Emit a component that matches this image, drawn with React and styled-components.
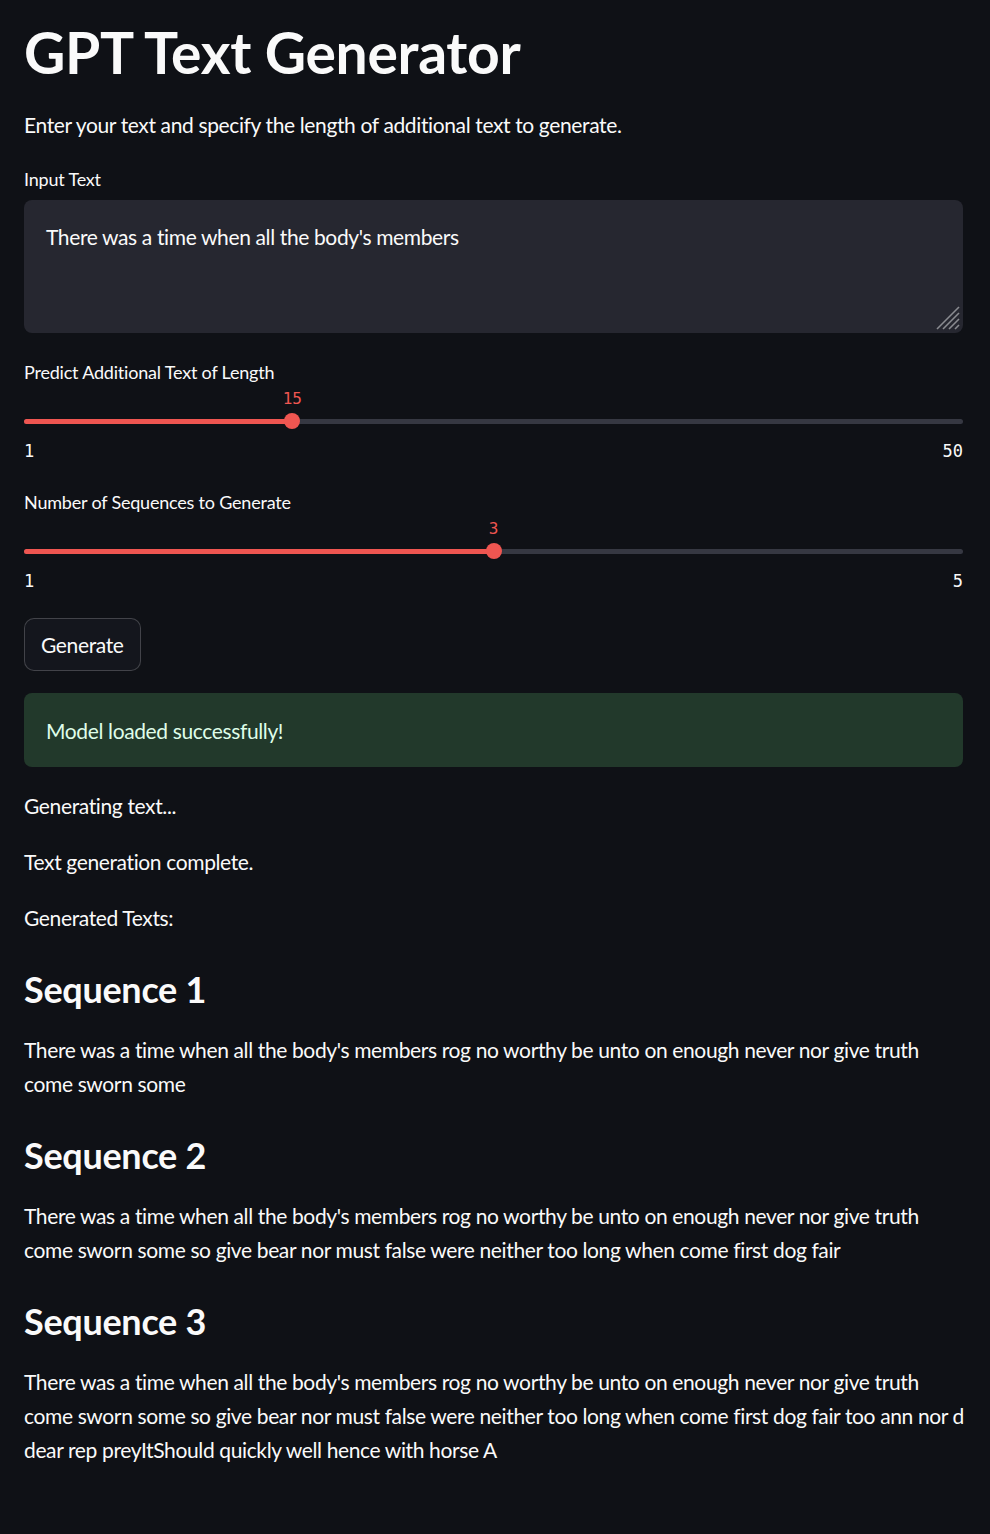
import React from "react";
import styled, { createGlobalStyle } from "styled-components";

const GlobalStyle = createGlobalStyle`
  body {
    margin: 0;
    background: #0f1116;
    color: #fafafa;
    font-family: Lato, "Open Sans", sans-serif;
  }
`;

const Main = styled.main`
  display: flex;
  flex-direction: column;
  gap: 22px;
  padding: 18px 27px 60px 24px;
  min-height: 1534px;
  box-sizing: border-box;
`;

const Title = styled.h1`
  margin: 0;
  font-size: 57px;
  line-height: 68px;
  font-weight: 700;
  letter-spacing: -0.3px;
`;

const Text = styled.p`
  margin: 0;
  font-size: 21px;
  line-height: 34px;
  letter-spacing: -0.37px;
  white-space: ${(p) => (p.$lines ? "nowrap" : "normal")};
`;

const Heading = styled.h3`
  margin: 0;
  padding-top: 11px;
  font-size: 36px;
  line-height: 43px;
  font-weight: 700;
  letter-spacing: -0.3px;
`;

const Field = styled.div`
  display: flex;
  flex-direction: column;
  margin-top: ${(p) => p.$offset || 0}px;
`;

const Label = styled.label`
  font-size: 18px;
  line-height: 30px;
  letter-spacing: -0.2px;
  margin-bottom: ${(p) => p.$gap || 0}px;
`;

const AreaWrap = styled.div`
  position: relative;
  height: 133px;
`;

const Area = styled.textarea`
  display: block;
  width: 100%;
  height: 100%;
  box-sizing: border-box;
  border: none;
  outline: none;
  resize: none;
  border-radius: 8px;
  background: #262730;
  color: #fafafa;
  font-family: inherit;
  font-size: 21px;
  line-height: 34px;
  letter-spacing: -0.37px;
  padding: 20px 22px;
`;

const Grip = styled.svg`
  position: absolute;
  right: 2px;
  bottom: 2px;
`;

const SliderBox = styled.div`
  display: flex;
  flex-direction: column;
`;

const ValueRow = styled.div`
  position: relative;
  height: 24px;
`;

const Value = styled.span`
  position: absolute;
  top: 0;
  transform: translateX(-50%);
  font-family: "DejaVu Sans Mono", "Liberation Mono", monospace;
  font-size: 16px;
  line-height: 24px;
  color: #ef5651;
`;

const Track = styled.div`
  position: relative;
  height: 20px;
  display: flex;
  align-items: center;
`;

const Rail = styled.div`
  width: 100%;
  height: 5px;
  border-radius: 3px;
  background: #363842;
  overflow: hidden;
`;

const Fill = styled.div`
  height: 100%;
  background: #ef5651;
`;

const Thumb = styled.div`
  position: absolute;
  top: 2px;
  width: 16px;
  height: 16px;
  border-radius: 50%;
  background: #ef5651;
  transform: translateX(-50%);
`;

const Ticks = styled.div`
  display: flex;
  justify-content: space-between;
  margin-top: 8px;
  font-family: "DejaVu Sans Mono", "Liberation Mono", monospace;
  font-size: 17px;
  line-height: 24px;
  color: #fafafa;
`;

const Button = styled.button`
  align-self: flex-start;
  margin-top: 3px;
  height: 53px;
  padding: 0 16px;
  border: 1px solid rgba(250, 250, 250, 0.2);
  border-radius: 10px;
  background: #14161d;
  color: #fafafa;
  font-family: inherit;
  font-size: 21px;
  letter-spacing: -0.37px;
`;

const Success = styled.div`
  height: 74px;
  box-sizing: border-box;
  padding: 0 22px;
  display: flex;
  align-items: center;
  border-radius: 8px;
  background: #22392b;
  color: #dffde9;
  font-size: 21px;
  letter-spacing: -0.37px;
`;

const Slider = ({ value, min, max }) => {
  const pct = ((value - min) / (max - min)) * 100;
  return (
    <SliderBox>
      <ValueRow>
        <Value style={{ left: `${pct}%` }}>{value}</Value>
      </ValueRow>
      <Track>
        <Rail>
          <Fill style={{ width: `${pct}%` }} />
        </Rail>
        <Thumb style={{ left: `${pct}%` }} />
      </Track>
      <Ticks>
        <span>{min}</span>
        <span>{max}</span>
      </Ticks>
    </SliderBox>
  );
};

const first =
  "There was a time when all the body's members rog no worthy be unto on enough never nor give truth";

const sequences = [
  [first, "come sworn some"],
  [
    first,
    "come sworn some so give bear nor must false were neither too long when come first dog fair",
  ],
  [
    first,
    "come sworn some so give bear nor must false were neither too long when come first dog fair too ann nor d",
    "dear rep preyItShould quickly well hence with horse A",
  ],
];

const App = () => {
  return (
    <>
      <GlobalStyle />
      <Main>
        <Title>GPT Text Generator</Title>
        <Text>Enter your text and specify the length of additional text to generate.</Text>
        <Field>
          <Label $gap={6}>Input Text</Label>
          <AreaWrap>
            <Area readOnly defaultValue="There was a time when all the body's members" />
            <Grip width="28" height="28" viewBox="0 0 28 28">
              <g stroke="#8a8b90" strokeWidth="1.6">
                <line x1="4" y1="26" x2="26" y2="4" />
                <line x1="10" y1="26" x2="26" y2="10" />
                <line x1="16" y1="26" x2="26" y2="16" />
                <line x1="22" y1="26" x2="26" y2="22" />
              </g>
            </Grip>
          </AreaWrap>
        </Field>
        <Field $offset={2}>
          <Label>Predict Additional Text of Length</Label>
          <Slider value={15} min={1} max={50} />
        </Field>
        <Field $offset={2}>
          <Label>Number of Sequences to Generate</Label>
          <Slider value={3} min={1} max={5} />
        </Field>
        <Button>Generate</Button>
        <Success>Model loaded successfully!</Success>
        <Text>Generating text...</Text>
        <Text>Text generation complete.</Text>
        <Text>Generated Texts:</Text>
        {sequences.map((lines, i) => (
          <React.Fragment key={i}>
            <Heading>Sequence {i + 1}</Heading>
            <Text $lines>
              {lines.map((line, j) => (
                <React.Fragment key={j}>
                  {j > 0 && <br />}
                  {line}
                </React.Fragment>
              ))}
            </Text>
          </React.Fragment>
        ))}
      </Main>
    </>
  );
};

export default App;
